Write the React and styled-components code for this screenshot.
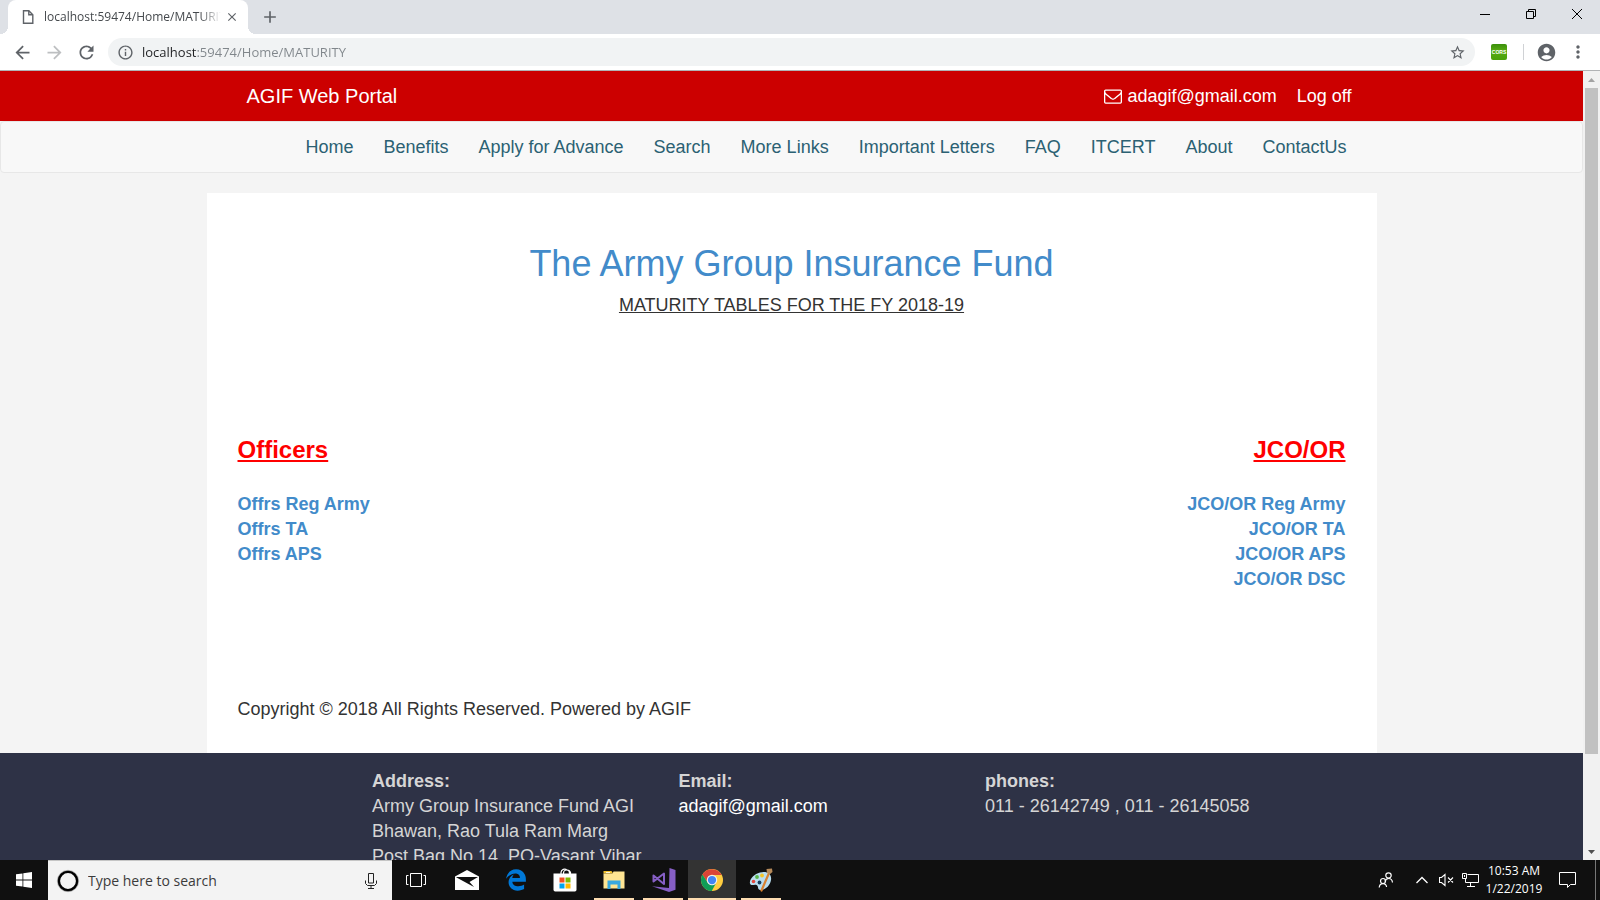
import React from "react";
import styled, { createGlobalStyle } from "styled-components";
import {
  MdAccountCircle,
  MdAdd,
  MdArrowBack,
  MdArrowForward,
  MdClose,
  MdInfoOutline,
  MdMoreVert,
  MdRefresh,
  MdStarBorder,
} from "react-icons/md";
import { FaEdgeLegacy } from "react-icons/fa";

const uiFont = `"Open Sans", "Noto Sans", sans-serif`;

const GlobalStyle = createGlobalStyle`
  * { box-sizing: border-box; }
  body { margin: 0; overflow: hidden; font-family: "Liberation Sans", Arial, sans-serif; }
  button, input { font: inherit; border: 0; margin: 0; padding: 0; background: none; outline: none; }
  a { text-decoration: none; }
  ul { list-style: none; margin: 0; padding: 0; }
  svg { display: block; flex: none; }
`;

const Desktop = styled.div`
  display: flex;
  flex-direction: column;
  height: 100vh;
`;

/* ---------- browser chrome ---------- */

const TabStrip = styled.div`
  flex: none;
  display: flex;
  height: 34px;
  padding-left: 8px;
  background: #dee1e6;
  font-family: ${uiFont};
`;

const Tab = styled.div`
  position: relative;
  display: flex;
  align-items: center;
  width: 240px;
  padding: 0 9px 0 12px;
  background: #fff;
  border-radius: 8px 8px 0 0;
  color: #45494d;

  &::before,
  &::after {
    content: "";
    position: absolute;
    bottom: 0;
    width: 8px;
    height: 8px;
  }
  &::before {
    left: -8px;
    background: radial-gradient(circle at 0 0, transparent 8px, #fff 8px);
  }
  &::after {
    right: -8px;
    background: radial-gradient(circle at 100% 0, transparent 8px, #fff 8px);
  }
`;

const TabTitle = styled.span`
  flex: 1;
  min-width: 0;
  margin: 0 4px 0 8px;
  overflow: hidden;
  white-space: nowrap;
  font-size: 12px;
  line-height: 18px;
  mask-image: linear-gradient(to right, #000 88%, transparent);
`;

const IconButton = styled.button`
  display: flex;
  align-items: center;
  justify-content: center;
  flex: none;
  width: ${(p) => p.$w || 32}px;
  height: ${(p) => p.$h || 32}px;
  color: ${(p) => p.$color || "#5f6368"};
`;

const WindowControls = styled.div`
  display: flex;
  margin-left: auto;
`;

const Toolbar = styled.div`
  flex: none;
  display: flex;
  align-items: center;
  height: 37px;
  padding: 0 12px 0 6px;
  background: #fff;
  border-bottom: 1px solid #b1b3b5;
  font-family: ${uiFont};
`;

const Omnibox = styled.label`
  flex: 1;
  display: flex;
  align-items: center;
  height: 28px;
  margin: 0 8px 0 6px;
  padding-left: 9px;
  border-radius: 14px;
  background: #f1f3f4;
  color: #5f6368;
`;

const UrlInput = styled.input`
  flex: 1;
  margin-left: 8px;
  font-size: 13px;
  line-height: 20px;
  color: transparent;
  background: linear-gradient(to right, #202124 55px, #80868b 55px);
  background-clip: text;
`;

const CorsBadge = styled.span`
  width: 16px;
  height: 16px;
  border-radius: 2px;
  background: linear-gradient(#3a8f0c, #57ab12 40%, #4aa10a);
  color: #fff;
  font: bold 5px/16px "Liberation Sans", Arial, sans-serif;
  text-align: center;
`;

const ToolDivider = styled.span`
  width: 1px;
  height: 16px;
  margin-left: 8px;
  background: #d0d2d5;
`;

/* ---------- web page ---------- */

const Viewport = styled.div`
  flex: 1;
  min-height: 0;
  display: flex;
`;

const Page = styled.div`
  flex: 1;
  min-width: 0;
  overflow: hidden;
  background: #f4f4f4;
  color: #333;
  font-size: 18px;
  line-height: 25px;
`;

const Header = styled.header`
  background: #c00;
`;

const HeaderInner = styled.div`
  display: flex;
  align-items: center;
  max-width: 1170px;
  height: 50px;
  margin: 0 auto;
  padding: 0 25px 0 40px;
`;

const Brand = styled.a`
  margin-right: auto;
  color: #fff;
  font-size: 20px;
`;

const HeaderLink = styled.a`
  display: flex;
  align-items: center;
  gap: 5px;
  margin-left: 20px;
  color: #fff;
`;

const Nav = styled.nav`
  margin-bottom: 20px;
  background: #f8f8f8;
  border: 1px solid #e7e7e7;
  border-radius: 4px;
`;

const NavList = styled.ul`
  display: flex;
  justify-content: flex-end;
  align-items: center;
  gap: 30px;
  max-width: 1170px;
  height: 50px;
  margin: 0 auto;
  padding-right: 30px;

  a { color: #2b6173; }
`;

const Card = styled.main`
  max-width: 1170px;
  margin: 0 auto;
  padding: 51px 31px 31px;
  background: #fff;
`;

const Title = styled.h1`
  margin: 0;
  color: #428bca;
  font-size: 36px;
  line-height: 40px;
  font-weight: 400;
  text-align: center;
`;

const Subtitle = styled.p`
  margin: 9px 0 118px;
  text-align: center;
  text-decoration: underline;
`;

const Tables = styled.div`
  display: flex;
  justify-content: space-between;
`;

const TableGroup = styled.section`
  text-align: ${(p) => p.$align};
  font-weight: 700;

  a { color: #428bca; }
`;

const GroupTitle = styled.h2`
  margin: 0 0 29px;
  color: #f00;
  font-size: 24px;
  line-height: 27px;
  text-decoration: underline;
`;

const Copyright = styled.p`
  margin: 105px 0 0;
`;

const Footer = styled.footer`
  display: grid;
  grid-template-columns: repeat(4, 1fr);
  padding: 16px 0 16px 357px;
  background: #2e3246;
  color: #d5d5d5;
`;

const FooterColumn = styled.address`
  padding: 0 15px;
  font-style: normal;

  a { color: #fff; }
`;

const ScrollTrack = styled.div`
  flex: none;
  display: flex;
  flex-direction: column;
  align-items: center;
  width: 17px;
  background: #f1f1f1;
`;

const ScrollThumb = styled.div`
  flex: 15;
  width: 13px;
  background: #c1c1c1;
`;

const ScrollRest = styled.div`
  flex: 2;
`;

/* ---------- taskbar ---------- */

const Taskbar = styled.div`
  flex: none;
  display: flex;
  height: 40px;
  background: #101010;
  color: #fff;
  font-family: ${uiFont};
`;

const SearchBox = styled.label`
  display: flex;
  align-items: center;
  width: 344px;
  padding: 0 14px 0 8px;
  background: #f3f3f3;
  border-top: 1px solid #c5c5c5;
`;

const SearchInput = styled.input`
  flex: 1;
  min-width: 0;
  margin-left: 8px;
  font-size: 14px;
  line-height: 20px;

  &::placeholder { color: #3b3b3b; opacity: 1; }
`;

const Apps = styled.div`
  display: flex;
  gap: 1px;
  margin-left: 3px;
`;

const AppButton = styled.button`
  display: flex;
  align-items: center;
  justify-content: center;
  position: relative;
  width: 48px;
  background: ${(p) => (p.$state === "active" ? "#333" : "transparent")};

  &::after {
    content: "";
    display: ${(p) => (p.$state ? "block" : "none")};
    position: absolute;
    bottom: 0;
    left: ${(p) => (p.$state === "active" ? 0 : 4)}px;
    right: ${(p) => (p.$state === "active" ? 0 : 4)}px;
    height: 2px;
    background: #fddcb0;
  }
`;

const Tray = styled.div`
  display: flex;
  align-items: center;
  margin-left: auto;
`;

const Clock = styled.time`
  width: 62px;
  font-size: 12px;
  line-height: 18px;
  text-align: center;
  white-space: nowrap;
`;

const ShowDesktop = styled.button`
  width: 5px;
  height: 40px;
  margin-left: 6px;
  border-left: 1px solid #777;
`;

/* ---------- drawings ---------- */

const PageIcon = () => (
  <svg width="16" height="16" viewBox="0 0 16 16" fill="none" stroke="#5f6368" strokeWidth="1.4">
    <path d="M3.5 1.7h5.3l4 4v8.6H3.5z" />
    <path d="M8.8 1.7v4h4" />
  </svg>
);

const EnvelopeIcon = () => (
  <svg width="18" height="18" viewBox="0 0 1792 1792" fill="#fff">
    <path d="M1664 1504v-768q-32 36-69 66-268 206-426 338-51 43-83 67t-86.5 48.5-102.5 24.5h-2q-48 0-102.5-24.5t-86.5-48.5-83-67q-158-132-426-338-37-30-69-66v768q0 13 9.5 22.5t22.5 9.5h1472q13 0 22.5-9.5t9.5-22.5zm0-1051v-24.5l-.5-13-3-12.5-5.5-9-9-7.5-14-2.5h-1472q-13 0-22.5 9.5t-9.5 22.5q0 168 147 284 193 152 401 317 6 5 35 29.5t46 37.5 44.5 31.5 50.5 27.5 43 9h2q20 0 43-9t50.5-27.5 44.5-31.5 46-37.5 35-29.5q208-165 401-317 54-43 100.5-115.5t46.5-131.5zm128-37v1088q0 66-47 113t-113 47h-1472q-66 0-113-47t-47-113v-1088q0-66 47-113t113-47h1472q66 0 113 47t47 113z" />
  </svg>
);

const ScrollArrow = ({ down }) => (
  <svg width="17" height="17" viewBox="0 0 17 17" fill={down ? "#505050" : "#a3a3a3"}>
    <path d={down ? "M5 7h7L8.500 11z" : "M5 11h7L8.500 7z"} />
  </svg>
);

const WindowsLogo = () => (
  <svg width="16" height="16" viewBox="0 0 16 16" fill="#fff">
    <path d="M0 2.300 6.500 1.400v6.200H0zM7.300 1.300 16 0v7.600H7.300zM0 8.400h6.500v6.200L0 13.700zM7.300 8.400H16V16l-8.700-1.300z" />
  </svg>
);

const CortanaRing = () => (
  <svg width="24" height="24" viewBox="0 0 24 24" fill="none">
    <circle cx="12" cy="12" r="9.200" stroke="#000" strokeWidth="2.600" />
    <circle cx="12" cy="12" r="10.700" stroke="#999" strokeWidth="0.600" />
  </svg>
);

const MicIcon = () => (
  <svg width="14" height="18" viewBox="0 0 14 18" fill="none" stroke="#222">
    <path d="M4.500 1.500h5v9.500h-5zM1.500 8.500v3l2 2h7l2-2v-3M7 13.500v3M4 16.500h6" />
  </svg>
);

const TaskViewIcon = () => (
  <svg width="20" height="14" viewBox="0 0 20 14" fill="none" stroke="#fff">
    <path d="M4.500.5h11v13h-11zM2.500 2.500h-2v9h2M17.500 2.500h2v9h-2" />
  </svg>
);

const MailIcon = () => (
  <svg width="24" height="20" viewBox="0 0 24 20">
    <path fill="#fff" d="M0 6.500 12 0l12 6.500V20H0z" />
    <path fill="#101010" d="M1 7h22l-8.500 5L19 17 2 7.700z" />
  </svg>
);

const StoreIcon = () => (
  <svg width="24" height="24" viewBox="0 0 24 24">
    <path fill="none" stroke="#fff" strokeWidth="1.200" d="M8 6V4.500a3.500 3.500 0 0 1 6-2.300M10.500 6V5a3 3 0 0 1 6 0v1M14 2a3.500 3.500 0 0 1 3.500 2.500V6" />
    <path fill="#fff" d="M.5 5.500h23v16.300a1.700 1.700 0 0 1-1.700 1.700H2.200a1.700 1.700 0 0 1-1.700-1.700z" />
    <path fill="#f25022" d="M6.500 9.500h5v5h-5z" />
    <path fill="#7fba00" d="M12.500 9.500h5v5h-5z" />
    <path fill="#00a4ef" d="M6.500 15.500h5v5h-5z" />
    <path fill="#ffb900" d="M12.500 15.500h5v5h-5z" />
  </svg>
);

const FolderIcon = () => (
  <svg width="22" height="20" viewBox="0 0 22 20">
    <path fill="#f2c230" d="M.5 1h8l1.500 2.500H.5z" />
    <path fill="#ffe593" d="M.5 3.500 9.500 3.500 10.500 1.500H21.500V18.500H.5z" />
    <path fill="#fff7dc" d="M3 2h4v1H3z" />
    <path fill="#39a9e0" d="M4.500 10.500h13V19h-3v-4.500h-7V19h-3z" />
  </svg>
);

const VisualStudioIcon = () => (
  <svg width="25" height="24" viewBox="0 0 25 24">
    <path fill="#865fc5" fillRule="evenodd" d="M18.500 0 24.500 2v19.700L18 24 1 18.300l17 1.700z" />
    <path fill="none" stroke="#865fc5" strokeWidth="2" strokeLinejoin="round" d="M2.500 7.500v6L13 5.500v10.500z" />
  </svg>
);

const ChromeIcon = () => (
  <svg width="22" height="22" viewBox="0 0 48 48">
    <circle cx="24" cy="24" r="24" fill="#ffcd40" />
    <path fill="#db4437" d="M24 13h20.900A24 24 0 0 0 3.200 12l11.300 17.500z" />
    <path fill="#0f9d58" d="M3.200 12A24 24 0 0 0 23.500 48L33.500 29.500 24 35 14.500 29.500z" />
    <circle cx="24" cy="24" r="11.500" fill="#f1f1f1" />
    <circle cx="24" cy="24" r="9" fill="#4285f4" />
  </svg>
);

const PaintIcon = () => (
  <svg width="24" height="24" viewBox="0 0 24 24">
    <path fill="#b9def0" d="M11 4.500C18 2.500 23 6 22 12c-1 6-6 10-10.500 10-3.500 0-1.500-4-4-5C5 16.200 2 18.500 1 15.500 0 11.500 5 6 11 4.500z" />
    <circle cx="4.500" cy="13.500" r="1.800" fill="#e2483d" />
    <circle cx="8" cy="9" r="1.900" fill="#58b84a" />
    <circle cx="13" cy="7.500" r="1.900" fill="#f5c527" />
    <circle cx="10.500" cy="14.500" r="1.900" fill="#173e5e" />
    <path stroke="#d98332" strokeWidth="2.200" strokeLinecap="round" d="M12.500 22.500 20 5" />
    <path fill="#b68a5a" d="M18 5 17.500 1 23 .5 23.500 4l-2.500 2z" />
  </svg>
);

const PeopleIcon = () => (
  <svg width="16" height="16" viewBox="0 0 16 16" fill="none" stroke="#fff" strokeWidth="1.200">
    <circle cx="10.500" cy="3.500" r="2.700" />
    <path d="M7 9.500c.5-2 2-3 3.700-3s3.500 1.300 3.800 4" />
    <circle cx="5" cy="9" r="2.500" />
    <path d="M1.200 15.500c.3-2.500 1.800-3.800 3.800-3.800s3.300 1.300 3.600 3.300" />
  </svg>
);

const ChevronUp = () => (
  <svg width="12" height="8" viewBox="0 0 12 8" fill="none" stroke="#fff" strokeWidth="1.300">
    <path d="M.5 7 6 1.500 11.500 7" />
  </svg>
);

const MutedIcon = () => (
  <svg width="15" height="14" viewBox="0 0 15 14" fill="none" stroke="#fff" strokeWidth="1.100">
    <path d="M.5 4.500h2l3.500-3v11l-3.500-3h-2zM9 4.500l5 5M14 4.500l-5 5" />
  </svg>
);

const NetworkIcon = () => (
  <svg width="17" height="14" viewBox="0 0 17 14" fill="none" stroke="#fff">
    <path d="M5.500 1.500h11v8h-13V6M.5.500h4v5h-4zM2.500 2v2M8.500 9.500v3.500M5 13.500h8" />
  </svg>
);

const NoticeIcon = () => (
  <svg width="17" height="16" viewBox="0 0 17 16" fill="none" stroke="#fff">
    <path d="M.5.500h16v12h-5l-3 3v-3h-8z" />
  </svg>
);

const navItems = [
  "Home", "Benefits", "Apply for Advance", "Search", "More Links",
  "Important Letters", "FAQ", "ITCERT", "About", "ContactUs",
];

const groups = [
  { title: "Officers", align: "left", links: ["Offrs Reg Army", "Offrs TA", "Offrs APS"] },
  { title: "JCO/OR", align: "right", links: ["JCO/OR Reg Army", "JCO/OR TA", "JCO/OR APS", "JCO/OR DSC"] },
];

const apps = [
  { name: "Mail", icon: <MailIcon /> },
  { name: "Edge", icon: <FaEdgeLegacy size={22} color="#0078d7" /> },
  { name: "Store", icon: <StoreIcon /> },
  { name: "File Explorer", icon: <FolderIcon />, state: "open" },
  { name: "Visual Studio", icon: <VisualStudioIcon />, state: "open" },
  { name: "Chrome", icon: <ChromeIcon />, state: "active" },
  { name: "Paint", icon: <PaintIcon />, state: "open" },
];

function BrowserChrome() {
  return (
    <>
      <TabStrip>
        <Tab>
          <PageIcon />
          <TabTitle>localhost:59474/Home/MATURITY</TabTitle>
          <IconButton $w={14} $h={16} aria-label="Close tab"><MdClose size={14} /></IconButton>
        </Tab>
        <IconButton $w={44} $h={34} aria-label="New tab"><MdAdd size={20} /></IconButton>
        <WindowControls>
          <IconButton $w={46} $h={28} aria-label="Minimize">
            <svg width="10" height="10" stroke="#000"><path d="M0 5.500h10" /></svg>
          </IconButton>
          <IconButton $w={46} $h={28} aria-label="Restore">
            <svg width="10" height="10" stroke="#000" fill="none"><path d="M.5 2.500h7v7h-7zM2.500 2.500v-2h7v7h-2" /></svg>
          </IconButton>
          <IconButton $w={46} $h={28} aria-label="Close">
            <svg width="10" height="10" stroke="#000"><path d="M0 0l10 10M10 0 0 10" /></svg>
          </IconButton>
        </WindowControls>
      </TabStrip>
      <Toolbar>
        <IconButton aria-label="Back"><MdArrowBack size={21} /></IconButton>
        <IconButton $color="#bdbfc1" aria-label="Forward"><MdArrowForward size={21} /></IconButton>
        <IconButton aria-label="Reload"><MdRefresh size={21} /></IconButton>
        <Omnibox>
          <MdInfoOutline size={17} />
          <UrlInput aria-label="Address" defaultValue="localhost:59474/Home/MATURITY" />
          <IconButton $w={36} $h={28} aria-label="Bookmark"><MdStarBorder size={17} /></IconButton>
        </Omnibox>
        <IconButton aria-label="CORS extension"><CorsBadge>CORS</CorsBadge></IconButton>
        <ToolDivider />
        <IconButton $w={44} aria-label="Profile"><MdAccountCircle size={21} /></IconButton>
        <IconButton $w={20} aria-label="Menu"><MdMoreVert size={20} /></IconButton>
      </Toolbar>
    </>
  );
}

function WebPage() {
  return (
    <Viewport>
      <Page>
        <Header>
          <HeaderInner>
            <Brand href="#">AGIF Web Portal</Brand>
            <HeaderLink href="mailto:adagif@gmail.com"><EnvelopeIcon />adagif@gmail.com</HeaderLink>
            <HeaderLink href="#">Log off</HeaderLink>
          </HeaderInner>
        </Header>
        <Nav>
          <NavList>
            {navItems.map((item) => <li key={item}><a href="#">{item}</a></li>)}
          </NavList>
        </Nav>
        <Card>
          <Title>The Army Group Insurance Fund</Title>
          <Subtitle>MATURITY TABLES FOR THE FY 2018-19</Subtitle>
          <Tables>
            {groups.map((g) => (
              <TableGroup key={g.title} $align={g.align}>
                <GroupTitle>{g.title}</GroupTitle>
                <ul>{g.links.map((l) => <li key={l}><a href="#">{l}</a></li>)}</ul>
              </TableGroup>
            ))}
          </Tables>
          <Copyright>Copyright © 2018 All Rights Reserved. Powered by AGIF</Copyright>
        </Card>
        <Footer>
          <FooterColumn>
            <strong>Address:</strong><br />
            Army Group Insurance Fund AGI Bhawan, Rao Tula Ram Marg<br />
            Post Bag No 14, PO-Vasant Vihar
          </FooterColumn>
          <FooterColumn>
            <strong>Email:</strong><br />
            <a href="mailto:adagif@gmail.com">adagif@gmail.com</a>
          </FooterColumn>
          <FooterColumn>
            <strong>phones:</strong><br />
            011 - 26142749 , 011 - 26145058
          </FooterColumn>
        </Footer>
      </Page>
      <ScrollTrack>
        <ScrollArrow />
        <ScrollThumb />
        <ScrollRest />
        <ScrollArrow down />
      </ScrollTrack>
    </Viewport>
  );
}

function SystemTaskbar() {
  return (
    <Taskbar>
      <IconButton $w={48} $h={40} aria-label="Start"><WindowsLogo /></IconButton>
      <SearchBox>
        <CortanaRing />
        <SearchInput aria-label="Search" placeholder="Type here to search" />
        <MicIcon />
      </SearchBox>
      <IconButton $w={48} $h={40} aria-label="Task view"><TaskViewIcon /></IconButton>
      <Apps>
        {apps.map((a) => (
          <AppButton key={a.name} $state={a.state} aria-label={a.name}>{a.icon}</AppButton>
        ))}
      </Apps>
      <Tray>
        <IconButton $w={48} $h={40} aria-label="People"><PeopleIcon /></IconButton>
        <IconButton $w={24} $h={40} aria-label="Hidden icons"><ChevronUp /></IconButton>
        <IconButton $w={24} $h={40} aria-label="Volume"><MutedIcon /></IconButton>
        <IconButton $w={25} $h={40} aria-label="Network"><NetworkIcon /></IconButton>
        <Clock>10:53 AM<br />1/22/2019</Clock>
        <IconButton $w={44} $h={40} aria-label="Notifications"><NoticeIcon /></IconButton>
        <ShowDesktop aria-label="Show desktop" />
      </Tray>
    </Taskbar>
  );
}

export default function App() {
  return (
    <Desktop>
      <GlobalStyle />
      <BrowserChrome />
      <WebPage />
      <SystemTaskbar />
    </Desktop>
  );
}
